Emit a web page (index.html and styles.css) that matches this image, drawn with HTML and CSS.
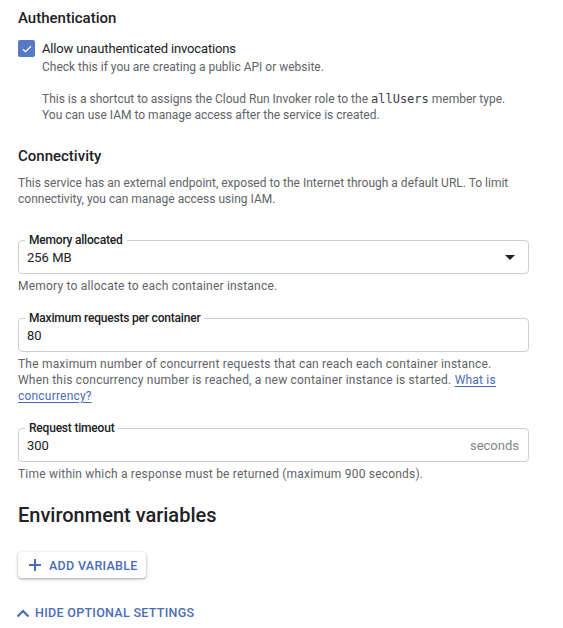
FILE: index.html
```html
<!DOCTYPE html>
<html>
<head>
<meta charset="utf-8">
<link rel="stylesheet" href="styles.css">
</head>
<body>
<div class="page">
  <h2 class="section-title">Authentication</h2>
  <div class="check-row">
    <span class="checkbox">
      <svg width="12" height="12" viewBox="0 0 24 24"><path d="M4 12.5l5 5L20 6.5" fill="none" stroke="#fff" stroke-width="2.4"/></svg>
    </span>
    <div class="check-body">
      <div class="check-label">Allow unauthenticated invocations</div>
      <p class="hint">Check this if you are creating a public API or website.</p>
      <p class="hint gap">This is a shortcut to assigns the Cloud Run Invoker role to the <code>allUsers</code> member type.<br>You can use IAM to manage access after the service is created.</p>
    </div>
  </div>

  <h2 class="section-title conn">Connectivity</h2>
  <p class="hint para">This service has an external endpoint, exposed to the Internet through a default URL. To limit connectivity, you can manage access using IAM.</p>

  <div class="field first">
    <span class="field-label">Memory allocated</span>
    <span class="field-value">256 MB</span>
    <svg class="caret" width="10" height="5" viewBox="0 0 10 5"><path d="M0 0h10L5 5z" fill="#202124"/></svg>
  </div>
  <p class="hint helper">Memory to allocate to each container instance.</p>

  <div class="field">
    <span class="field-label">Maximum requests per container</span>
    <span class="field-value">80</span>
  </div>
  <p class="hint helper">The maximum number of concurrent requests that can reach each container instance.<br>When this concurrency number is reached, a new container instance is started. <a href="#" class="link">What is<br>concurrency?</a></p>

  <div class="field">
    <span class="field-label">Request timeout</span>
    <span class="field-value">300</span>
    <span class="suffix">seconds</span>
  </div>
  <p class="hint helper">Time within which a response must be returned (maximum 900 seconds).</p>

  <h2 class="big-title">Environment variables</h2>

  <button class="add-btn">
    <svg width="14" height="14" viewBox="0 0 14 14"><path d="M7 1v12M1 7h12" stroke="#4b6cb7" stroke-width="2"/></svg>
    <span>ADD VARIABLE</span>
  </button>

  <div class="toggle">
    <svg width="14" height="9" viewBox="0 0 14 9"><path d="M1.5 7.5L7 2l5.5 5.5" fill="none" stroke="#4b6cb7" stroke-width="2.2"/></svg>
    <span>HIDE OPTIONAL SETTINGS</span>
  </div>
</div>
</body>
</html>
```

FILE: styles.css
```css
* { box-sizing: border-box; }
body {
  margin: 0;
  background: #fff;
  font-family: Roboto, "Liberation Sans", sans-serif;
  color: #202124;
}
.page {
  padding: 8px 34px 0 18px;
}
.section-title {
  margin: 0;
  font-size: 15px;
  line-height: 20px;
  font-weight: 500;
  color: #202124;
}
.check-row {
  display: flex;
  margin-top: 12px;
}
.checkbox {
  width: 17px;
  height: 17px;
  flex: none;
  border-radius: 2px;
  background: #5579c6;
  display: flex;
  align-items: center;
  justify-content: center;
}
.check-body {
  margin-left: 7px;
}
.check-label {
  font-size: 13px;
  line-height: 17px;
  letter-spacing: -0.15px;
  color: #202124;
}
.hint {
  margin: 0;
  font-size: 12px;
  line-height: 16px;
  color: #5f6368;
}
.check-label + .hint { margin-top: 2px; }
.hint.gap { margin-top: 16px; }
code {
  font-family: "DejaVu Sans Mono", monospace;
  font-size: 12px;
  color: #3c4043;
}
.conn { margin-top: 23px; }
.para { margin-top: 9px; }
.field {
  position: relative;
  height: 34px;
  border: 1px solid #cfcfcf;
  border-radius: 4px;
  display: flex;
  align-items: center;
  padding: 0 9px 0 8px;
  margin-top: 24px;
}
.field.first { margin-top: 33px; }
.field-label {
  position: absolute;
  left: 6px;
  top: -9px;
  padding: 0 4px;
  background: #fff;
  font-size: 12px;
  line-height: 16px;
  font-weight: 500;
  color: #202124;
  letter-spacing: -0.2px;
}
.field-value {
  font-size: 13px;
  flex: 1;
  color: #202124;
}
.caret { margin-right: 4px; }
.suffix {
  font-size: 13px;
  color: #80868b;
}
.helper {
  margin-top: 4px;
  letter-spacing: 0.2px;
}
.link {
  color: #4b6cb7;
  text-decoration: underline;
  text-underline-offset: 2px;
}
.big-title {
  margin: 19px 0 0;
  font-size: 20px;
  line-height: 28px;
  font-weight: 500;
  color: #202124;
}
.add-btn {
  margin-top: 23px;
  display: flex;
  align-items: center;
  gap: 7px;
  height: 26px;
  padding: 0 8px 0 10px;
  background: #fff;
  border: none;
  border-radius: 4px;
  box-shadow: 0 1px 2px rgba(60,64,67,.3), 0 1px 3px 1px rgba(60,64,67,.15);
  font-family: Roboto, "Liberation Sans", sans-serif;
  font-size: 12.5px;
  font-weight: 500;
  letter-spacing: 0.3px;
  color: #4b6cb7;
}
.toggle {
  margin-top: 27px;
  display: flex;
  align-items: center;
  gap: 5px;
  font-size: 12.5px;
  font-weight: 500;
  letter-spacing: 0.3px;
  line-height: 16px;
  color: #4b6cb7;
  margin-left: -2px;
}
```
